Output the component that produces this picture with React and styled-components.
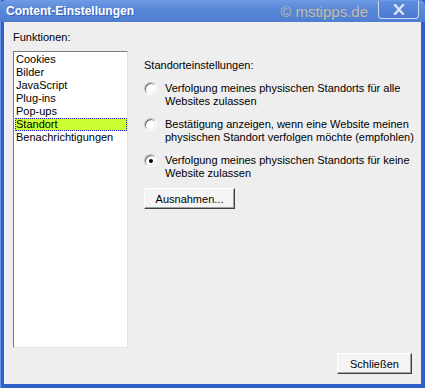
import React, { useState } from "react"
import styled, { createGlobalStyle } from "styled-components"

const Global = createGlobalStyle`
body {
  margin: 0;
  background: #ffffff;
}
`

const Window = styled.div`
width: 425px;
height: 388px;
box-sizing: border-box;
display: flex;
flex-direction: column;
background: #2f5fc8;
padding: 0 4px 4px 3px;
border-left: 1px solid #6d97e0;
font-family: Tahoma, "Liberation Sans", sans-serif;
font-size: 11px;
color: #000;
`

const TitleBar = styled.div`
height: 22px;
margin: 0 -4px 0 -4px;
padding: 0 6px 0 6px;
display: flex;
align-items: center;
background: linear-gradient(#6e9be4, #5a88d8 40%, #4f7ed2);
border-radius: 6px 6px 0 0;
`

const Title = styled.div`
color: #fff;
font-family: "Liberation Sans", sans-serif;
font-weight: bold;
font-size: 12px;
flex: 1;
text-shadow: 1px 1px 0 #3a64b8;
`

const Watermark = styled.div`
color: #c4bca2;
font-family: "Liberation Sans", sans-serif;
font-size: 15px;
margin-right: 10px;
`

const CloseBtn = styled.div`
width: 39px;
height: 17px;
margin-top: -3px;
border: 1px solid #c8d8f4;
border-top: none;
border-radius: 0 0 4px 4px;
background: linear-gradient(#5f8de0, #4b79cf);
display: flex;
align-items: center;
justify-content: center;
`

const Client = styled.div`
flex: 1;
background: #eeeeee;
display: flex;
flex-direction: column;
padding: 9px 9px 10px 9px;
`

const Main = styled.div`
flex: 1;
display: flex;
gap: 16px;
`

const LeftCol = styled.div`
display: flex;
flex-direction: column;
`

const Label = styled.div`
line-height: 13px;
margin-bottom: ${p => p.$gap || 6}px;
`

const ListBox = styled.div`
width: 112px;
height: 294px;
background: #fff;
border-top: 1px solid #7a7a7a;
border-left: 1px solid #7a7a7a;
border-right: 1px solid #e2e2e2;
border-bottom: 1px solid #e2e2e2;
padding: 1px 0 0 1px;
`

const ListItem = styled.div`
height: 13px;
line-height: 13px;
padding-left: 1px;
box-sizing: border-box;
background: ${p => (p.$sel ? "#ccff33" : "transparent")};
outline: ${p => (p.$sel ? "1px dotted #2020c0" : "none")};
outline-offset: -1px;
`

const RightCol = styled.div`
display: flex;
flex-direction: column;
padding-top: 28px;
`

const RadioRow = styled.div`
display: flex;
gap: 8px;
margin-bottom: 10px;
line-height: 13px;
white-space: nowrap;
`

const RadioDot = styled.div`
width: 11px;
height: 11px;
margin-top: 0;
flex: none;
border-radius: 50%;
background: #fff;
box-shadow: inset 1px 1px 0 #6a6a6a, inset -1px -1px 0 #e8e8e8;
border: 1px solid #c0c0c0;
border-right-color: #fff;
border-bottom-color: #fff;
display: flex;
align-items: center;
justify-content: center;
box-sizing: content-box;
&::after {
  content: "";
  width: 4px;
  height: 4px;
  border-radius: 50%;
  background: ${p => (p.$on ? "#000" : "transparent")};
}
`

const Button = styled.button`
font-family: Tahoma, "Liberation Sans", sans-serif;
font-size: 11px;
color: #000;
background: #f4f4f4;
width: ${p => p.$w}px;
height: 21px;
padding: 0;
margin-top: ${p => p.$top || 0}px;
border: 1px solid #fff;
border-right-color: #404040;
border-bottom-color: #404040;
box-shadow: inset -1px -1px 0 #a0a0a0;
cursor: pointer;
`

const Footer = styled.div`
display: flex;
justify-content: flex-end;
`

const items = ["Cookies", "Bilder", "JavaScript", "Plug-ins", "Pop-ups", "Standort", "Benachrichtigungen"]

const options = [
  ["Verfolgung meines physischen Standorts für alle", "Websites zulassen"],
  ["Bestätigung anzeigen, wenn eine Website meinen", "physischen Standort verfolgen möchte (empfohlen)"],
  ["Verfolgung meines physischen Standorts für keine", "Website zulassen"],
]

function App() {
  const [sel, setSel] = useState(5)
  const [opt, setOpt] = useState(2)

  return (
    <Window>
      <Global />
      <TitleBar>
        <Title>Content-Einstellungen</Title>
        <Watermark>© mstipps.de</Watermark>
        <CloseBtn>
          <svg width="12" height="11" viewBox="0 0 12 11">
            <path d="M2 1 L10 10 M10 1 L2 10" stroke="#dfe8f8" strokeWidth="2.2" strokeLinecap="square" fill="none" />
          </svg>
        </CloseBtn>
      </TitleBar>
      <Client>
        <Main>
          <LeftCol>
            <Label $gap={7}>Funktionen:</Label>
            <ListBox>
              {items.map((it, i) => (
                <ListItem key={it} $sel={i === sel} onClick={() => setSel(i)}>{it}</ListItem>
              ))}
            </ListBox>
          </LeftCol>
          <RightCol>
            <Label $gap={10}>Standorteinstellungen:</Label>
            {options.map((o, i) => (
              <RadioRow key={i} onClick={() => setOpt(i)}>
                <RadioDot $on={i === opt} />
                <div>{o[0]}<br />{o[1]}</div>
              </RadioRow>
            ))}
            <Button $w={91} $top={-2}>Ausnahmen...</Button>
          </RightCol>
        </Main>
        <Footer>
          <Button $w={75}>Schließen</Button>
        </Footer>
      </Client>
    </Window>
  )
}

export default App
